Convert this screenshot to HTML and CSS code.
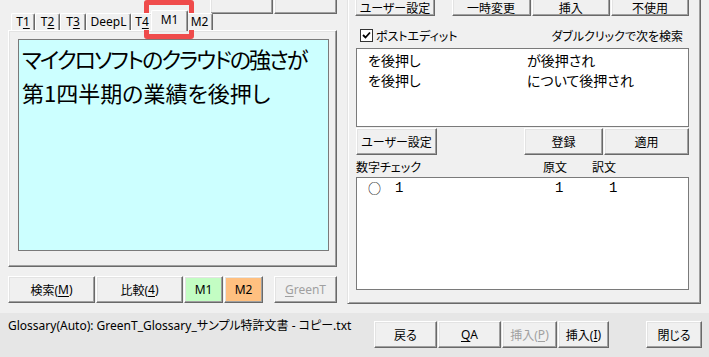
FILE: index.html
```html
<!DOCTYPE html>
<html lang="ja">
<head>
    <meta charset="UTF-8">
    <title>GreenT</title>
    <link rel="stylesheet" href="styles.css">
</head>
<body>
    <div class="main">
        <div class="left">
            <div class="top-btns">
                <button class="btn w63"></button>
                <button class="btn w63"></button>
            </div>
            <div class="tabs">
                <div class="tab t1">T<u>1</u></div>
                <div class="tab t2">T<u>2</u></div>
                <div class="tab t3">T<u>3</u></div>
                <div class="tab deepl">DeepL</div>
                <div class="tab t4">T<u>4</u></div>
                <div class="tab active">M1</div>
                <div class="tab m2">M2</div>
            </div>
            <div class="tab-page">
                <div class="source-box"><span class="kana-line">マイクロソフトのクラウドの強さが</span><br>第1四半期の業績を後押し</div>
            </div>
            <div class="left-btns">
                <button class="btn w87">検索(<u>M</u>)</button>
                <button class="btn w87">比較(<u>4</u>)</button>
                <button class="btn w39 green">M1</button>
                <button class="btn w39 orange">M2</button>
                <button class="btn w63 disabled push"><u>G</u>reenT</button>
            </div>
        </div>

        <div class="right panel">
            <div class="btn-row top">
                <button class="btn w80">ユーザー設定</button>
                <button class="btn w79 gap17">一時変更</button>
                <button class="btn w79">挿入</button>
                <button class="btn w78">不使用</button>
            </div>
            <div class="check-row">
                <span class="checkbox">
                    <svg width="9" height="9" viewBox="0 0 9 9"><polyline points="1,4 3.5,6.5 8,1.5" fill="none" stroke="#000" stroke-width="1.8"/></svg>
                </span>
                <span>ポストエディット</span>
                <span class="hint">ダブルクリックで次を検索</span>
            </div>
            <div class="list list-terms">
                <div class="row"><span>を後押し</span><span>が後押され</span></div>
                <div class="row"><span>を後押し</span><span>について後押され</span></div>
            </div>
            <div class="btn-row mid">
                <button class="btn w81">ユーザー設定</button>
                <button class="btn w79 push">登録</button>
                <button class="btn w85">適用</button>
            </div>
            <div class="num-head">
                <span>数字チェック</span><span>原文</span><span>訳文</span>
            </div>
            <div class="list list-nums">
                <div class="row"><span class="mark">○</span><span>1</span><span>1</span><span>1</span></div>
            </div>
        </div>
    </div>

    <div class="status">
        <div class="status-text">Glossary(Auto): GreenT_Glossary_サンプル特許文書 - コピー.txt</div>
        <div class="status-btns">
            <button class="btn w63">戻る</button>
            <button class="btn w63"><u>Q</u>A</button>
            <button class="btn w55 disabled">挿入(<u>P</u>)</button>
            <button class="btn w51">挿入(<u>I</u>)</button>
            <button class="btn w56 gap37">閉じる</button>
        </div>
    </div>

    <!-- 注目枠 -->
    <div class="highlight"></div>
</body>
</html>
```

FILE: styles.css
```css
* {
    box-sizing: border-box;
}
body {
    margin: 0;
    width: 709px;
    height: 357px;
    overflow: hidden;
    position: relative;
    background: #f0f0f0;
    font-family: "Noto Sans", "Noto Sans CJK JP", sans-serif;
    font-size: 12px;
    color: #000;
    font-feature-settings: "palt";
}
u {
    text-decoration-thickness: 1px;
    text-underline-offset: 2px;
}
.main {
    display: flex;
    align-items: flex-start;
    margin-top: -12px;
    padding: 0 8px 9px 8px;
}
.left {
    width: 329px;
}
.right {
    width: 354px;
    margin-left: 10px;
}

/* ボタン */
.btn {
    font: inherit;
    color: #000;
    height: 27px;
    padding: 0;
    margin: 0;
    display: flex;
    align-items: center;
    justify-content: center;
    background: #f0f0f0;
    border: 1px solid;
    border-color: #fff #696969 #696969 #fff;
    box-shadow: inset -1px -1px #a0a0a0, inset 1px 1px #e3e3e3;
    white-space: nowrap;
}
.btn.disabled {
    color: #a0a0a0;
}
.btn.green {
    background: #c3fdc3;
}
.btn.orange {
    background: #ffc080;
}
.w39 { width: 39px; }
.w51 { width: 51px; }
.w55 { width: 55px; }
.w56 { width: 56px; }
.w63 { width: 63px; }
.w78 { width: 78px; }
.w79 { width: 79px; }
.w80 { width: 80px; }
.w81 { width: 81px; }
.w85 { width: 85px; }
.w87 { width: 87px; }
.push { margin-left: auto; }
.gap17 { margin-left: 17px; }
.gap37 { margin-left: 37px !important; }

/* 左側 */
.top-btns {
    display: flex;
    justify-content: flex-end;
    gap: 1px;
}
.top-btns .btn {
    height: 26px;
}
.tabs {
    display: flex;
    align-items: flex-end;
    height: 18px;
    margin-top: -2px;
    padding-left: 3px;
    position: relative;
    z-index: 1;
}
.tab {
    height: 17px;
    line-height: 15px;
    text-align: center;
    background: #f0f0f0;
    border: 1px solid;
    border-bottom: none;
    border-color: #fff #696969 #696969 #fff;
    box-shadow: inset -1px 0 #a0a0a0;
    border-radius: 2px 2px 0 0;
}
.t1 { width: 24px; }
.t2 { width: 25px; }
.t3 { width: 26px; }
.deepl { width: 45px; }
.t4 { width: 22px; }
.m2 { width: 27px; }
.tab.active {
    width: 37px;
    height: 21px;
    margin: 0 -2px -1px -2px;
    line-height: 18px;
    position: relative;
    z-index: 2;
}
.tab-page {
    height: 237px;
    padding: 8px 7px 15px 9px;
    background: #f0f0f0;
    border: 1px solid;
    border-color: #fff #696969 #696969 #fff;
    box-shadow: inset -1px -1px #a0a0a0, inset 1px 1px #e3e3e3;
}
.source-box {
    height: 212px;
    background: #ccffff;
    border: 1px solid #7a7a7a;
    padding: 1px 3px;
    font-family: "Noto Sans CJK JP", sans-serif;
    font-size: 22px;
    line-height: 34px;
    white-space: nowrap;
}
.kana-line {
    letter-spacing: -1.9px;
}
.left-btns {
    display: flex;
    gap: 1px;
    margin-top: 9px;
}

/* 右側 */
.panel {
    height: 316px;
    padding: 1px 11px 0 8px;
    border: 1px solid;
    border-color: #e3e3e3 #696969 #696969 #e3e3e3;
    box-shadow: inset 1px 1px #fff, inset -1px -1px #a0a0a0;
}
.btn-row {
    display: flex;
    gap: 1px;
}
.btn-row.top {
    margin-left: -1px;
}
.btn-row.top .btn {
    height: 26px;
    padding-top: 9px;
}
.btn-row.top .gap17 {
    margin-left: 16px;
}
.check-row {
    display: flex;
    align-items: center;
    height: 15px;
    margin-top: 12px;
    padding: 0 6px 0 4px;
}
.checkbox {
    width: 13px;
    height: 13px;
    margin-right: 3px;
    border: 1px solid #333;
    background: #fff;
    display: flex;
    align-items: center;
    justify-content: center;
}
.hint {
    margin-left: auto;
}
.list {
    background: #fff;
    border: 1px solid #7a7a7a;
    padding: 1px 0 0 11px;
    font-family: "Noto Sans CJK JP", sans-serif;
    font-size: 14px;
}
.list-terms {
    height: 79px;
    margin-top: 5px;
}
.list-terms .row {
    display: grid;
    grid-template-columns: 159px auto;
    line-height: 20px;
}
.btn-row.mid {
    margin-top: 1px;
}
.num-head {
    display: grid;
    grid-template-columns: 187px 49px auto;
    height: 22px;
    padding-top: 6px;
    line-height: 14px;
}
.list-nums {
    height: 113px;
    padding-top: 0;
}
.list-nums .row {
    display: grid;
    grid-template-columns: 27px 160px 54px auto;
    line-height: 20px;
    font-family: "Liberation Mono", monospace;
}
.list-nums .mark {
    font-family: "Noto Sans CJK JP", sans-serif;
    font-size: 13px;
}

/* ステータス */
.status {
    display: flex;
    height: 44px;
    padding: 6px 7px 0 8px;
    background: #e6e6e6;
}
.status-text {
    line-height: 14px;
    white-space: nowrap;
}
.status-btns {
    display: flex;
    gap: 1px;
    margin-left: auto;
    margin-top: 2px;
}
.status-btns .gap37 {
    margin-left: 36px !important;
}

.highlight {
    position: absolute;
    left: 144px;
    top: 0;
    width: 50px;
    height: 39px;
    border: 5px solid #ef4b4b;
    border-radius: 3px;
}
```
